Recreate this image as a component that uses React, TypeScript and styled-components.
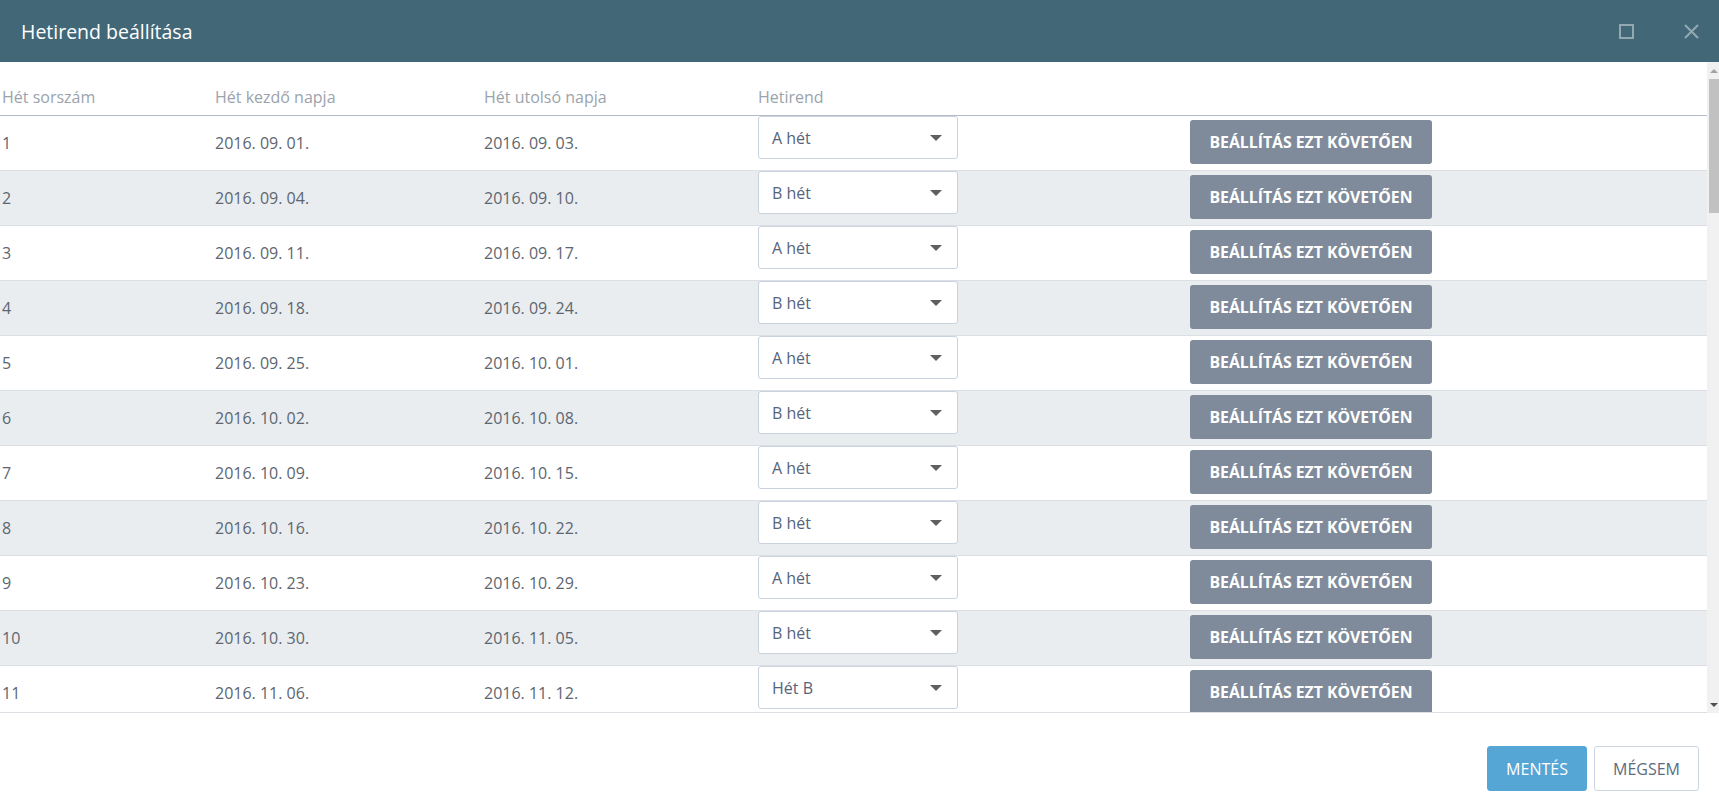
import React from 'react';
import styled, { createGlobalStyle } from 'styled-components';

const GlobalStyle = createGlobalStyle`
  html, body {
    margin: 0;
    padding: 0;
    background: #ffffff;
    font-family: 'Open Sans', 'Liberation Sans', sans-serif;
  }
  * {
    box-sizing: border-box;
  }
`;

const Dialog = styled.div`
  display: flex;
  flex-direction: column;
  width: 1719px;
  height: 807px;
  background: #ffffff;
  overflow: hidden;
`;

const TitleBar = styled.div`
  display: flex;
  align-items: center;
  height: 62px;
  padding: 0 20px 0 21px;
  background: #426878;
  flex-shrink: 0;
`;

const Title = styled.h1`
  flex: 1;
  margin: 0;
  font-size: 19.5px;
  font-weight: 400;
  color: #ffffff;
`;

const WindowButton = styled.button<{ $gap: number }>`
  display: flex;
  align-items: center;
  justify-content: center;
  width: 16px;
  height: 16px;
  padding: 0;
  margin-left: ${(p) => p.$gap}px;
  border: none;
  background: transparent;
  cursor: pointer;
`;

const Body = styled.div`
  display: flex;
  height: 651px;
  flex-shrink: 0;
`;

const Viewport = styled.div`
  flex: 1;
  overflow: hidden;
  border-bottom: 1px solid #dcdfe3;
`;

const Scrollbar = styled.div`
  display: flex;
  flex-direction: column;
  align-items: flex-end;
  width: 12px;
  background: #f1f1f1;
`;

const ScrollButton = styled.div`
  display: flex;
  align-items: center;
  justify-content: center;
  width: 12px;
  height: 17px;
`;

const ArrowUp = styled.span`
  width: 0;
  height: 0;
  margin-left: 2px;
  border-left: 4px solid transparent;
  border-right: 4px solid transparent;
  border-bottom: 4px solid #a3a3a3;
`;

const ArrowDown = styled.span`
  width: 0;
  height: 0;
  margin-left: 2px;
  border-left: 4px solid transparent;
  border-right: 4px solid transparent;
  border-top: 4px solid #505050;
`;

const Track = styled.div`
  flex: 1;
  width: 10px;
`;

const Thumb = styled.div`
  width: 10px;
  height: 134px;
  background: #c1c1c1;
`;

const columns = '213px 269px 274px 432px 1fr';

const HeadRow = styled.div`
  display: grid;
  grid-template-columns: ${columns};
  align-items: end;
  height: 54px;
  padding: 0 0 7px 2px;
  border-bottom: 1px solid #b4bcc7;
`;

const HeadCell = styled.div`
  font-size: 16px;
  line-height: 22px;
  color: #9ba3ac;
`;

const Row = styled.div<{ $shaded: boolean }>`
  display: grid;
  grid-template-columns: ${columns};
  align-items: center;
  height: 55px;
  padding-left: 2px;
  background: ${(p) => (p.$shaded ? '#e9edf0' : '#ffffff')};
  border-bottom: 1px solid #dcdfe3;
`;

const Cell = styled.div`
  font-size: 16px;
  line-height: 22px;
  color: #5d6670;
`;

const SelectCell = styled.div`
  align-self: start;
`;

const Select = styled.div`
  display: flex;
  align-items: center;
  justify-content: space-between;
  width: 200px;
  height: 43px;
  padding: 0 15px 0 13px;
  background: #ffffff;
  border: 1px solid #c9d3df;
  border-radius: 3px;
  font-size: 16px;
  color: #55647a;
`;

const Caret = styled.span`
  width: 0;
  height: 0;
  border-left: 6px solid transparent;
  border-right: 6px solid transparent;
  border-top: 6px solid #5f5f5f;
`;

const ApplyButton = styled.button`
  width: 242px;
  height: 44px;
  margin-top: -2px;
  padding: 0;
  border: none;
  border-radius: 3px;
  background: #7f8b9a;
  color: #ffffff;
  font-family: 'Open Sans', 'Liberation Sans', sans-serif;
  font-size: 15.8px;
  font-weight: 700;
  cursor: pointer;
`;

const Footer = styled.div`
  display: flex;
  justify-content: flex-end;
  align-items: flex-start;
  gap: 7px;
  flex: 1;
  padding: 33px 20px 0 0;
`;

const FooterButton = styled.button<{ $primary?: boolean }>`
  width: ${(p) => (p.$primary ? 100 : 105)}px;
  height: 45px;
  padding: 0;
  border: 1px solid ${(p) => (p.$primary ? '#55a6d5' : '#ccd5e0')};
  border-radius: 3px;
  background: ${(p) => (p.$primary ? '#55a6d5' : '#ffffff')};
  color: ${(p) => (p.$primary ? '#ffffff' : '#5b6b82')};
  font-family: 'Open Sans', 'Liberation Sans', sans-serif;
  font-size: 16px;
  cursor: pointer;
`;

interface Week {
  index: number;
  start: Date;
  end: Date;
  label: string;
}

const pad = (n: number) => String(n).padStart(2, '0');
const formatDate = (d: Date) =>
  `${d.getFullYear()}. ${pad(d.getMonth() + 1)}. ${pad(d.getDate())}.`;

function buildWeeks(): Week[] {
  const weeks: Week[] = [];
  let start = new Date(2016, 8, 1);
  let end = new Date(2016, 8, 3);
  for (let i = 1; i <= 53; i++) {
    let label = i % 2 === 1 ? 'A hét' : 'B hét';
    if (i === 11) label = 'Hét B';
    weeks.push({ index: i, start, end, label });
    start = new Date(end.getFullYear(), end.getMonth(), end.getDate() + 1);
    end = new Date(start.getFullYear(), start.getMonth(), start.getDate() + 6);
  }
  return weeks;
}

const weeks = buildWeeks();

function App() {
  return (
    <>
      <GlobalStyle />
      <Dialog>
        <TitleBar>
          <Title>Hetirend beállítása</Title>
          <WindowButton $gap={0} aria-label="Teljes méret">
            <svg width="15" height="15" viewBox="0 0 15 15">
              <rect x="1" y="1" width="13" height="13" fill="none" stroke="#92a9b4" strokeWidth="2" />
            </svg>
          </WindowButton>
          <WindowButton $gap={49} aria-label="Bezárás">
            <svg width="15" height="15" viewBox="0 0 15 15">
              <path d="M1 1 L14 14 M14 1 L1 14" stroke="#92a9b4" strokeWidth="2" />
            </svg>
          </WindowButton>
        </TitleBar>
        <Body>
          <Viewport>
            <HeadRow>
              <HeadCell>Hét sorszám</HeadCell>
              <HeadCell>Hét kezdő napja</HeadCell>
              <HeadCell>Hét utolsó napja</HeadCell>
              <HeadCell>Hetirend</HeadCell>
              <HeadCell />
            </HeadRow>
            {weeks.map((w) => (
              <Row key={w.index} $shaded={w.index % 2 === 0}>
                <Cell>{w.index}</Cell>
                <Cell>{formatDate(w.start)}</Cell>
                <Cell>{formatDate(w.end)}</Cell>
                <SelectCell>
                  <Select>
                    {w.label}
                    <Caret />
                  </Select>
                </SelectCell>
                <div>
                  <ApplyButton>BEÁLLÍTÁS EZT KÖVETŐEN</ApplyButton>
                </div>
              </Row>
            ))}
          </Viewport>
          <Scrollbar>
            <ScrollButton>
              <ArrowUp />
            </ScrollButton>
            <Track>
              <Thumb />
            </Track>
            <ScrollButton>
              <ArrowDown />
            </ScrollButton>
          </Scrollbar>
        </Body>
        <Footer>
          <FooterButton $primary>MENTÉS</FooterButton>
          <FooterButton>MÉGSEM</FooterButton>
        </Footer>
      </Dialog>
    </>
  );
}

export default App;
